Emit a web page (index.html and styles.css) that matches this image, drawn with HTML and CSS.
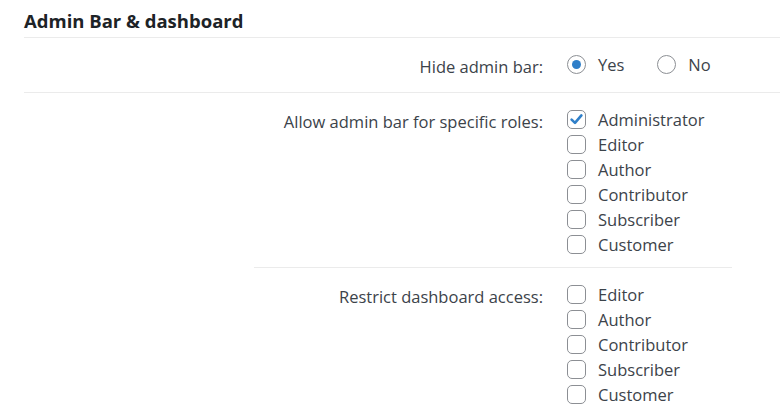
FILE: index.html
```html
<!DOCTYPE html>
<html>
<head>
<meta charset="utf-8">
<link rel="stylesheet" href="styles.css">
</head>
<body>
<div class="page">
  <h2 class="title">Admin Bar &amp; dashboard</h2>
  <div class="row row-main">
    <div class="label">Hide admin bar:</div>
    <div class="radios">
      <label class="opt"><span class="radio checked"></span>Yes</label>
      <label class="opt"><span class="radio"></span>No</label>
    </div>
  </div>
  <div class="nested">
    <div class="row row-sub first">
      <div class="label">Allow admin bar for specific roles:</div>
      <div class="checks">
        <label class="opt"><span class="box checked"><svg viewBox="0 0 19 19" width="19" height="19"><path d="M4.6 9.6 L8 12.9 L14.4 5.4" fill="none" stroke="#2f7fc9" stroke-width="2.6" stroke-linecap="round" stroke-linejoin="round"/></svg></span>Administrator</label>
        <label class="opt"><span class="box"></span>Editor</label>
        <label class="opt"><span class="box"></span>Author</label>
        <label class="opt"><span class="box"></span>Contributor</label>
        <label class="opt"><span class="box"></span>Subscriber</label>
        <label class="opt"><span class="box"></span>Customer</label>
      </div>
    </div>
    <div class="row row-sub">
      <div class="label">Restrict dashboard access:</div>
      <div class="checks">
        <label class="opt"><span class="box"></span>Editor</label>
        <label class="opt"><span class="box"></span>Author</label>
        <label class="opt"><span class="box"></span>Contributor</label>
        <label class="opt"><span class="box"></span>Subscriber</label>
        <label class="opt"><span class="box"></span>Customer</label>
      </div>
    </div>
  </div>
</div>
</body>
</html>
```
FILE: styles.css
```css
html, body {
  margin: 0;
  padding: 0;
  background: #ffffff;
}
body {
  font-family: "Open Sans", "Noto Sans", sans-serif;
  font-size: 16.5px;
  color: #3c434a;
  overflow: hidden;
  width: 780px;
  height: 420px;
}
.page {
  padding-left: 24px;
}
.title {
  margin: 0;
  font-size: 18.5px;
  font-weight: 700;
  color: #1d2327;
  line-height: 24px;
  padding-top: 9px;
  padding-bottom: 4px;
  border-bottom: 1px solid #ebebeb;
}
.row {
  display: grid;
  column-gap: 24px;
}
.row-main {
  grid-template-columns: 519px 1fr;
  padding: 14px 0 13px;
  border-bottom: 1px solid #ebebeb;
}
.label {
  text-align: right;
  line-height: 25px;
  padding-top: 2px;
  white-space: nowrap;
}
.radios {
  display: flex;
  gap: 33px;
  align-self: start;
}
.opt {
  display: flex;
  align-items: center;
  gap: 12px;
  line-height: 25px;
  height: 25px;
  color: #3c434a;
}
.radio {
  width: 19px;
  height: 19px;
  border: 1px solid #8c8f94;
  border-radius: 50%;
  box-sizing: border-box;
  display: flex;
  align-items: center;
  justify-content: center;
}
.radio.checked::after {
  content: "";
  width: 9px;
  height: 9px;
  border-radius: 50%;
  background: #2f7fc9;
}
.nested {
  margin-left: 230px;
  width: 478px;
}
.row-sub {
  grid-template-columns: 289px 1fr;
  padding: 14px 0 10px;
}
.row-sub.first {
  border-bottom: 1px solid #ebebeb;
}
.checks {
  display: flex;
  flex-direction: column;
}
.box {
  width: 19px;
  height: 19px;
  border: 1px solid #8c8f94;
  border-radius: 5px;
  box-sizing: border-box;
  display: flex;
  align-items: center;
  justify-content: center;
}
.box svg { display: block; flex: none; }
```
